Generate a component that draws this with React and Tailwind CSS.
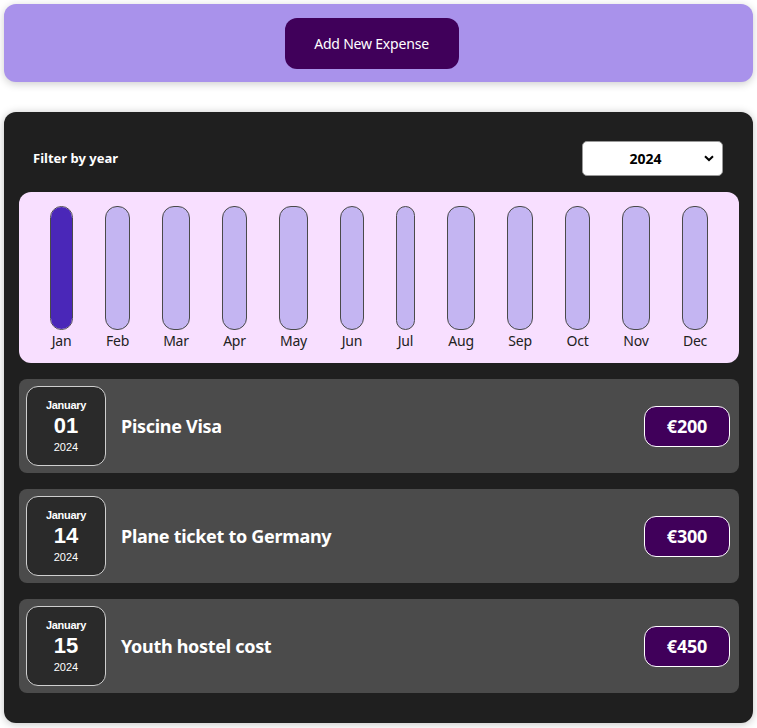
import React from 'react';

const months = [
  { label: 'Jan', w: 'w-[23px]', fill: 'h-full' },
  { label: 'Feb', w: 'w-[25px]', fill: 'h-0' },
  { label: 'Mar', w: 'w-[28px]', fill: 'h-0' },
  { label: 'Apr', w: 'w-[25px]', fill: 'h-0' },
  { label: 'May', w: 'w-[29px]', fill: 'h-0' },
  { label: 'Jun', w: 'w-[24px]', fill: 'h-0' },
  { label: 'Jul', w: 'w-[19px]', fill: 'h-0' },
  { label: 'Aug', w: 'w-[28px]', fill: 'h-0' },
  { label: 'Sep', w: 'w-[26px]', fill: 'h-0' },
  { label: 'Oct', w: 'w-[25px]', fill: 'h-0' },
  { label: 'Nov', w: 'w-[28px]', fill: 'h-0' },
  { label: 'Dec', w: 'w-[26px]', fill: 'h-0' },
];

const expenses = [
  { day: '01', title: 'Piscine Visa', amount: '€200' },
  { day: '14', title: 'Plane ticket to Germany', amount: '€300' },
  { day: '15', title: 'Youth hostel cost', amount: '€450' },
];

const ChartBar = ({ label, w, fill }) => (
  <div className="flex flex-col items-center">
    <div className={`${w} h-[124px] rounded-[12px] border border-[#4a4a4a] bg-[#c4b5f2] overflow-hidden flex flex-col justify-end`}>
      <div className={`${fill} w-full bg-[#4a27b8]`}></div>
    </div>
    <span className="mt-[2px] text-[14px] leading-[18px] tracking-[-0.2px] text-[#222]">{label}</span>
  </div>
);

const ExpenseItem = ({ day, title, amount }) => (
  <div className="flex items-center justify-between bg-[#4b4b4b] rounded-[8px] p-[7px] pr-[9px]">
    <div className="flex items-center">
      <div className="w-[80px] h-[80px] flex flex-col items-center justify-center rounded-[12px] border border-[#cfcfcf] bg-[#2a2a2a] text-white font-['Liberation_Sans',Arial,sans-serif]">
        <span className="text-[11px] font-bold leading-[13px] tracking-[-0.3px]">January</span>
        <span className="text-[22px] font-bold leading-[26px] mt-[1px]">{day}</span>
        <span className="text-[11px] leading-[13px] mt-[2px]">2024</span>
      </div>
      <h2 className="ml-[15px] text-[18px] font-bold tracking-[-0.3px] text-white">{title}</h2>
    </div>
    <div className="w-[86px] h-[41px] flex items-center justify-center rounded-[12px] border border-white bg-[#40005a] text-white text-[18px] font-bold tracking-[-0.2px]">
      {amount}
    </div>
  </div>
);

const App = () => {
  return (
    <div className="min-h-screen bg-white p-[4px] font-['Noto_Sans','Open_Sans',sans-serif]">
      <div className="bg-[#a992eb] rounded-[12px] shadow-[0_2px_8px_rgba(0,0,0,0.2)] h-[78px] flex items-center justify-center">
        <button className="w-[174px] h-[51px] mr-[14px] rounded-[12px] bg-[#40005a] text-white text-[14px] tracking-[-0.2px]">
          Add New Expense
        </button>
      </div>

      <div className="mt-[30px] bg-[#1f1f1f] rounded-[12px] shadow-[0_1px_8px_rgba(0,0,0,0.25)] pt-[15px] pl-[15px] pr-[14px] pb-[30px]">
        <div className="flex items-center justify-between pl-[14px] pr-[16px] pt-[14px] pb-[16px]">
          <span className="text-white text-[13px] font-bold">Filter by year</span>
          <div className="relative">
            <select className="appearance-none w-[141px] h-[35px] rounded-[5px] border border-[#999] bg-white text-black text-[14px] font-bold text-center pr-[14px]">
              <option>2024</option>
            </select>
            <svg className="absolute right-[9px] top-[14px] pointer-events-none" width="10" height="7" viewBox="0 0 10 7">
              <path d="M1 1.2 L5 5 L9 1.2" fill="none" stroke="#000" strokeWidth="2" />
            </svg>
          </div>
        </div>

        <div className="bg-[#f8dfff] rounded-[12px] pt-[14px] pb-[13px] flex justify-center gap-8">
          {months.map((m) => (
            <ChartBar key={m.label} {...m} />
          ))}
        </div>

        <div className="mt-[16px] flex flex-col gap-4">
          {expenses.map((e) => (
            <ExpenseItem key={e.day} {...e} />
          ))}
        </div>
      </div>
    </div>
  );
};

export default App;
